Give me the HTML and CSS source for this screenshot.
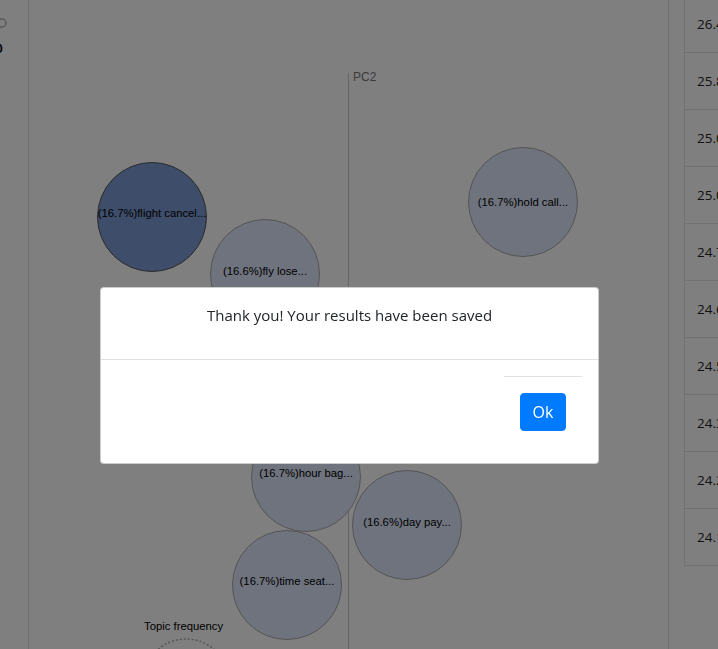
FILE: index.html
```html
<!DOCTYPE html>
<html>
<head>
<meta charset="utf-8">
<link rel="stylesheet" href="styles.css">
</head>
<body>
<div class="page">
  <div class="chart-area">
    <svg class="chart" width="684" height="649" viewBox="0 0 684 649">
      <rect class="toggle" x="-10" y="19" width="16" height="8" rx="4"></rect>
      <text class="zero" x="-4" y="53">0</text>
      <line class="frame" x1="28.5" y1="0" x2="28.5" y2="649"></line>
      <line class="frame" x1="668.5" y1="0" x2="668.5" y2="649"></line>
      <line class="axis" x1="348.5" y1="73" x2="348.5" y2="649"></line>
      <text class="axis-label" x="353" y="81">PC2</text>

      <circle class="bubble dark" cx="152" cy="217" r="54.5"></circle>
      <text class="bubble-label" x="152" y="217">(16.7%)flight cancel...</text>

      <circle class="bubble" cx="265" cy="274" r="54.5"></circle>
      <text class="bubble-label" x="265" y="275">(16.6%)fly lose...</text>

      <circle class="bubble" cx="523" cy="202" r="54.5"></circle>
      <text class="bubble-label" x="523" y="206">(16.7%)hold call...</text>

      <circle class="bubble" cx="306" cy="477" r="54.5"></circle>
      <text class="bubble-label" x="306" y="477">(16.7%)hour bag...</text>

      <circle class="bubble" cx="407" cy="525" r="54.5"></circle>
      <text class="bubble-label" x="407" y="526">(16.6%)day pay...</text>

      <circle class="bubble" cx="287" cy="585" r="54.5"></circle>
      <text class="bubble-label" x="287" y="585">(16.7%)time seat...</text>

      <text class="legend-title" x="144" y="630">Topic frequency</text>
      <circle class="legend-ring" cx="186" cy="682" r="43"></circle>
    </svg>
  </div>
  <table class="scores">
    <tr><td>26.4</td></tr>
    <tr><td>25.8</td></tr>
    <tr><td>25.0</td></tr>
    <tr><td>25.0</td></tr>
    <tr><td>24.7</td></tr>
    <tr><td>24.6</td></tr>
    <tr><td>24.5</td></tr>
    <tr><td>24.3</td></tr>
    <tr><td>24.2</td></tr>
    <tr><td>24.1</td></tr>
  </table>
</div>

<div class="backdrop">
  <div class="modal">
    <div class="modal-header">Thank you! Your results have been saved</div>
    <div class="modal-footer">
      <hr class="rule">
      <button class="btn-ok">Ok</button>
    </div>
  </div>
</div>
</body>
</html>
```

FILE: styles.css
```css
html, body {
  margin: 0;
  padding: 0;
  background: #ffffff;
  overflow: hidden;
}

body {
  width: 718px;
  height: 649px;
  font-family: "Open Sans", "Noto Sans", sans-serif;
  color: #212529;
}

.page {
  display: flex;
  width: 718px;
  height: 649px;
  overflow: hidden;
}

.chart-area {
  flex: 0 0 684px;
  height: 649px;
}

.chart {
  display: block;
  overflow: visible;
}

.toggle {
  fill: none;
  stroke: #b0b0b0;
  stroke-width: 1.5;
}

.zero {
  font-family: "Liberation Sans", Arial, sans-serif;
  font-size: 12px;
  font-weight: bold;
  fill: #000;
}

.frame {
  stroke: #dcdcdc;
  stroke-width: 1;
}

.axis {
  stroke: #c8c8c8;
  stroke-width: 1;
}

.axis-label {
  font-family: "Liberation Sans", Arial, sans-serif;
  font-size: 12px;
  fill: #777;
}

.bubble {
  fill: #dde6fb;
  stroke: #a8a8a8;
  stroke-width: 1;
}

.bubble.dark {
  fill: #7c9ad4;
  stroke: #555;
}

.bubble-label {
  font-family: "Liberation Sans", Arial, sans-serif;
  font-size: 11.3px;
  fill: #000;
  text-anchor: middle;
}

.legend-title {
  font-family: "Liberation Sans", Arial, sans-serif;
  font-size: 11.3px;
  fill: #000;
}

.legend-ring {
  fill: none;
  stroke: #aaa;
  stroke-width: 1.5;
  stroke-dasharray: 2 2;
}

.scores {
  border-collapse: collapse;
  margin-top: -5px;
  flex: 0 0 auto;
  align-self: flex-start;
}

.scores td {
  height: 56px;
  width: 80px;
  padding: 0 0 0 12px;
  border: 1px solid #dee2e6;
  font-family: "Open Sans", "Noto Sans", sans-serif;
  font-size: 13.5px;
  color: #212529;
  vertical-align: middle;
}

.backdrop {
  position: fixed;
  inset: 0;
  background: rgba(0, 0, 0, 0.5);
  padding: 287px 0 0 100px;
  box-sizing: border-box;
}

.modal {
  width: 499px;
  background: #fff;
  border: 1px solid rgba(0, 0, 0, 0.2);
  border-radius: 4px;
  box-sizing: border-box;
}

.modal-header {
  height: 72px;
  box-sizing: border-box;
  padding-top: 15px;
  text-align: center;
  font-size: 15px;
  line-height: 24px;
  border-bottom: 1px solid #dee2e6;
}

.modal-footer {
  display: flex;
  flex-direction: column;
  align-items: flex-end;
  padding: 16px 16px 32px 16px;
}

.rule {
  width: 78px;
  margin: 0;
  border: 0;
  border-top: 1px solid #dee2e6;
}

.btn-ok {
  margin: 16px 16px 0 0;
  width: 46px;
  height: 38px;
  background: #007bff;
  color: #fff;
  border: 1px solid #007bff;
  border-radius: 4px;
  font-family: "Open Sans", "Noto Sans", sans-serif;
  font-size: 16px;
  padding: 0;
}
```
